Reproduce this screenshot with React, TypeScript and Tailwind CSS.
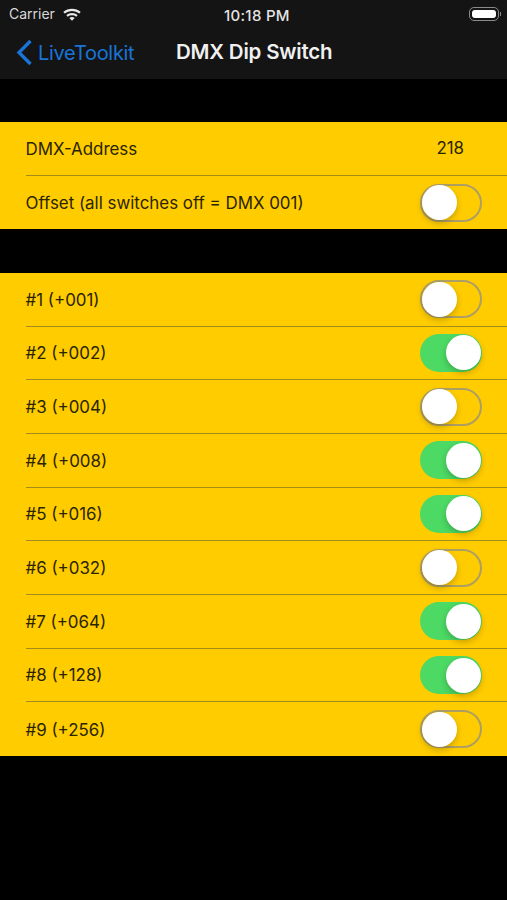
const switches = [
	{ label: "#1 (+001)", on: false },
	{ label: "#2 (+002)", on: true },
	{ label: "#3 (+004)", on: false },
	{ label: "#4 (+008)", on: true },
	{ label: "#5 (+016)", on: true },
	{ label: "#6 (+032)", on: false },
	{ label: "#7 (+064)", on: true },
	{ label: "#8 (+128)", on: true },
	{ label: "#9 (+256)", on: false },
];

function Toggle({ on }: { on: boolean }) {
	return (
		<div
			className={`box-border flex h-[38px] w-[62px] items-center rounded-full ${
				on
					? "justify-end bg-[#4cd964] pr-[1px]"
					: "justify-start border-[2px] border-[#ad9f63] pl-0"
			}`}
		>
			<div className="h-[35px] w-[35px] rounded-full bg-white shadow-[0_3px_6px_rgba(0,0,0,0.22)]" />
		</div>
	);
}

function Row({ children, last }: { children: React.ReactNode; last?: boolean }) {
	return (
		<div className="pl-[25.5px]">
			<div
				className={`flex h-[53.7px] items-center justify-between pr-[25px] ${
					last ? "" : "border-b border-[#a38c1c]"
				}`}
			>
				{children}
			</div>
		</div>
	);
}

export default function App() {
	return (
		<div className="flex h-[900px] w-[507px] flex-col overflow-hidden bg-black font-['Inter',sans-serif] text-[16.9px] text-[#2b2400]">
			{/* Status bar */}
			<div className="relative flex h-[27px] items-center bg-[#141414] px-[9px] text-[14px] text-[#d8d8d8]">
				<span>Carrier</span>
				<svg className="ml-[8px] mt-[1px]" width="18" height="13" viewBox="0 0 18 13" fill="none">
					<path d="M1 4.8C5.5 0.8 12.5 0.8 17 4.8" stroke="#e8e8e8" strokeWidth="2.2" />
					<path d="M4 7.8C6.8 5.5 11.2 5.5 14 7.8" stroke="#e8e8e8" strokeWidth="2.2" />
					<path d="M6.3 10C8 8.8 10 8.8 11.7 10L9 12.8Z" fill="#e8e8e8" />
				</svg>
				<span className="absolute left-[224px] top-[5px] text-[15px] font-medium tracking-[0.3px] text-[#e4e4e4]">
					10:18 PM
				</span>
				<div className="absolute left-[469px] flex items-center">
					<div className="h-[14px] w-[30px] rounded-[5px] border border-[#8a8a8a] p-[2px]">
						<div className="h-full w-full rounded-[3px] bg-white" />
					</div>
					<div className="ml-[1px] h-[4px] w-[1px] bg-[#8a8a8a]" />
				</div>
			</div>

			{/* Nav bar */}
			<div className="relative flex h-[52px] items-center bg-[#141414] pb-[1px]">
				<svg className="ml-[16px]" width="17" height="27" viewBox="0 0 17 27" fill="none">
					<path d="M14.5 2L3 13.5L14.5 25" stroke="#1a74d8" strokeWidth="3.4" />
				</svg>
				<span className="ml-[5px] text-[20px] tracking-[-0.3px] text-[#1a74d8]">LiveToolkit</span>
				<span className="absolute left-[176px] text-[20.5px] font-semibold tracking-[-0.2px] text-[#f0f0f0]">
					DMX Dip Switch
				</span>
			</div>

			{/* Address section */}
			<div className="mt-[43px] bg-[#ffcc00]">
				<Row>
					<span className="pt-[2px]">DMX-Address</span>
					<span className="pr-[18px] pt-[1px]">218</span>
				</Row>
				<Row last>
					<span className="pt-[2px]">Offset (all switches off = DMX 001)</span>
					<Toggle on={false} />
				</Row>
			</div>

			{/* Switches */}
			<div className="mt-[43.5px] bg-[#ffcc00]">
				{switches.map((item, i) => (
					<Row key={item.label} last={i === switches.length - 1}>
						<span className="pt-[2px]">{item.label}</span>
						<Toggle on={item.on} />
					</Row>
				))}
			</div>
		</div>
	);
}
